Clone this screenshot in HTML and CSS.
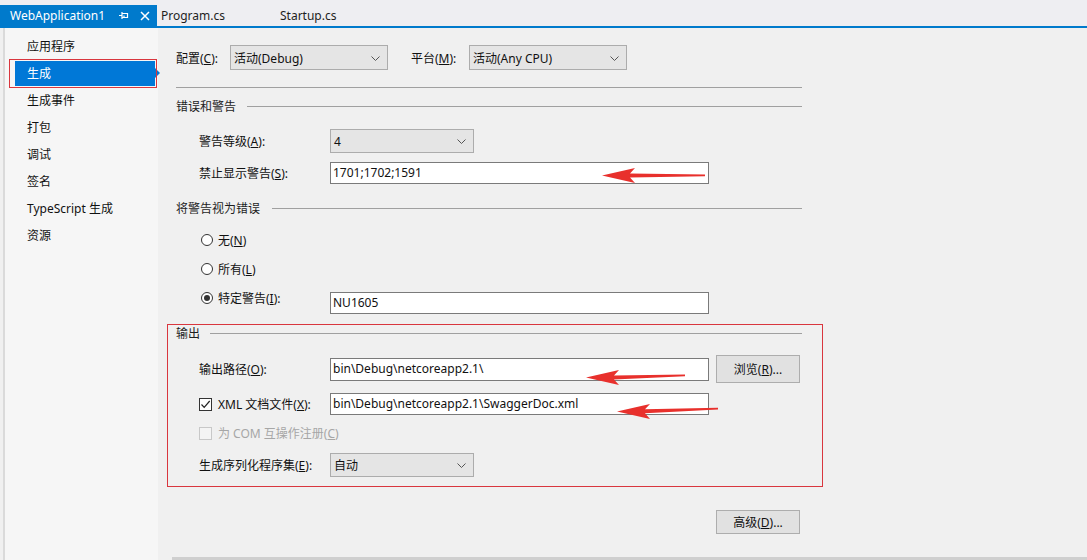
FILE: index.html
```html
<!DOCTYPE html>
<html lang="zh-CN">
<head>
    <meta charset="UTF-8">
    <title>WebApplication1 - 生成</title>
    <link rel="stylesheet" href="styles.css">
</head>
<body>
    <div class="tabs">
        <div class="tab active">
            <span class="tab-name">WebApplication1</span>
            <svg class="pin" width="10" height="9" viewBox="0 0 10 9">
                <path d="M0 4.5H3M3 1V8M3 2.5H8.5V6.5H3M5 6.5V4.5" fill="none" stroke="#fff" stroke-width="1.2"/>
            </svg>
            <svg class="close" width="10" height="10" viewBox="0 0 10 10">
                <path d="M1 1L9 9M9 1L1 9" stroke="#fff" stroke-width="1.5"/>
            </svg>
        </div>
        <div class="tab program">Program.cs</div>
        <div class="tab">Startup.cs</div>
    </div>

    <div class="page">
        <nav class="side">
            <div class="item">应用程序</div>
            <div class="item selected">生成</div>
            <div class="item">生成事件</div>
            <div class="item">打包</div>
            <div class="item">调试</div>
            <div class="item">签名</div>
            <div class="item">TypeScript 生成</div>
            <div class="item">资源</div>
        </nav>

        <main class="main">
            <div class="config-row">
                <span class="cfg-label">配置(<u>C</u>):</span>
                <div class="select cfg-select">活动(Debug)<svg class="chev" width="9" height="5" viewBox="0 0 9 5"><path d="M0.5 0.5L4.5 4.5L8.5 0.5" fill="none" stroke="#555"/></svg></div>
                <span class="cfg-label platform">平台(<u>M</u>):</span>
                <div class="select cfg-select">活动(Any CPU)<svg class="chev" width="9" height="5" viewBox="0 0 9 5"><path d="M0.5 0.5L4.5 4.5L8.5 0.5" fill="none" stroke="#555"/></svg></div>
            </div>

            <div class="sep"></div>

            <div class="group-head first">错误和警告<span class="rule"></span></div>

            <div class="row level">
                <span class="label">警告等级(<u>A</u>):</span>
                <div class="select small">4<svg class="chev" width="9" height="5" viewBox="0 0 9 5"><path d="M0.5 0.5L4.5 4.5L8.5 0.5" fill="none" stroke="#555"/></svg></div>
            </div>
            <div class="row suppress">
                <span class="label">禁止显示警告(<u>S</u>):</span>
                <div class="input">1701;1702;1591</div>
            </div>

            <div class="group-head treat">将警告视为错误<span class="rule"></span></div>

            <div class="radio-row none"><span class="radio"></span>无(<u>N</u>)</div>
            <div class="radio-row all"><span class="radio"></span>所有(<u>L</u>)</div>
            <div class="row specific">
                <span class="label radio-label"><span class="radio checked"></span>特定警告(<u>I</u>):</span>
                <div class="input">NU1605</div>
            </div>

            <div class="output-box">
                <div class="group-head out">输出<span class="rule"></span></div>

                <div class="row path">
                    <span class="label">输出路径(<u>O</u>):</span>
                    <div class="input">bin\Debug\netcoreapp2.1\</div>
                    <div class="button browse">浏览(<u>R</u>)...</div>
                </div>
                <div class="row xml">
                    <span class="label check-label">
                        <span class="check"><svg width="11" height="11" viewBox="0 0 11 11"><path d="M1.5 5.5L4.2 8.3L9.7 2" fill="none" stroke="#222" stroke-width="1.2"/></svg></span>XML 文档文件(<u>X</u>):
                    </span>
                    <div class="input">bin\Debug\netcoreapp2.1\SwaggerDoc.xml</div>
                </div>
                <div class="check-row disabled"><span class="check"></span>为 COM 互操作注册(<u>C</u>)</div>
                <div class="row serial">
                    <span class="label">生成序列化程序集(<u>E</u>):</span>
                    <div class="select small">自动<svg class="chev" width="9" height="5" viewBox="0 0 9 5"><path d="M0.5 0.5L4.5 4.5L8.5 0.5" fill="none" stroke="#555"/></svg></div>
                </div>
            </div>

            <div class="advanced-row">
                <div class="button">高级(<u>D</u>)...</div>
            </div>

            <div class="hscroll"></div>
        </main>
    </div>

    <!-- annotation arrows drawn over the form -->
    <svg class="arrow a1" width="104" height="15" viewBox="0 0 104 15"><polygon points="0,7.5 33,0 28,5.6 103,6.6 103,8.2 28,9.6 33,15"/></svg>
    <svg class="arrow a2" width="100" height="15" viewBox="0 0 100 15"><polygon points="0,7.5 33,0 28,5.4 99,4.6 99,6.2 28,9.4 33,15"/></svg>
    <svg class="arrow a3" width="102" height="15" viewBox="0 0 102 15"><polygon points="0,7.5 33,0 28,5.2 101,3.8 101,5.4 28,9.2 33,15"/></svg>
</body>
</html>
```

FILE: styles.css
```css
* {
    margin: 0;
    padding: 0;
    box-sizing: border-box;
}

body {
    font-family: "Noto Sans", "Noto Sans CJK SC", sans-serif;
    font-size: 12px;
    color: #111;
    background: #f0f0f0;
    height: 560px;
    overflow: hidden;
    position: relative;
}

u {
    text-decoration: underline;
    text-underline-offset: 1px;
}

/* Document tabs */
.tabs {
    display: flex;
    height: 28px;
    padding-top: 5px;
    background: #eeeef2;
    border-bottom: 2px solid #007acc;
}

.tab {
    height: 21px;
    display: flex;
    align-items: center;
    padding-left: 4px;
    color: #1e1e1e;
    font-size: 12px;
}

.tab.active {
    width: 157px;
    padding-left: 10px;
    background: #007acc;
    color: #fff;
}

.tab.active .pin {
    margin-left: 14px;
}

.tab.active .close {
    margin-left: 11px;
}

.tab.program {
    width: 119px;
}

/* Page */
.page {
    display: flex;
    height: 532px;
}

.side {
    width: 155px;
    margin-left: 3px;
    border-left: 2px solid #dadada;
    background: #f6f6f6;
    padding-top: 5px;
}

.item {
    height: 27px;
    line-height: 27px;
    padding-left: 22px;
}

.item.selected {
    position: relative;
    height: 25px;
    line-height: 25px;
    margin: 1px 0 1px 10px;
    width: 140px;
    padding-left: 12px;
    background: #0078d7;
    color: #fff;
}

.item.selected::before {
    content: '';
    position: absolute;
    right: -5px;
    top: 7px;
    border-left: 5px solid #0078d7;
    border-top: 5px solid transparent;
    border-bottom: 5px solid transparent;
}

.item.selected::after {
    content: '';
    position: absolute;
    left: -6px;
    right: -2px;
    top: -2px;
    bottom: -2px;
    border: 1px solid #d9363e;
}

.main {
    flex: 1;
    padding-top: 17px;
    padding-left: 18px;
}

/* Config / platform */
.config-row {
    display: flex;
    align-items: center;
    height: 25px;
}

.cfg-label {
    width: 54px;
}

.cfg-label.platform {
    width: 58px;
    margin-left: 23px;
}

.select {
    position: relative;
    display: flex;
    align-items: center;
    padding-left: 3px;
    background: #e5e5e5;
    border: 1px solid #acacac;
}

.select .chev {
    position: absolute;
    right: 7px;
    top: 50%;
    margin-top: -2px;
}

.cfg-select {
    width: 158px;
    height: 25px;
}

.select.small {
    width: 144px;
    height: 24px;
}

.sep {
    width: 626px;
    height: 1px;
    margin-top: 17px;
    background: #a0a0a0;
}

.group-head {
    display: flex;
    align-items: center;
    height: 16px;
    width: 626px;
    color: #1e1e1e;
}

.group-head .rule {
    flex: 1;
    height: 1px;
    background: #a0a0a0;
    margin-left: 11px;
}

.group-head.first {
    margin-top: 10px;
}

.group-head.treat {
    margin-top: 16px;
}

.group-head.treat .rule {
    margin-left: 12px;
}

/* Form rows */
.row {
    display: flex;
    align-items: center;
    padding-left: 23px;
}

.label {
    width: 131px;
    flex: none;
}

.input {
    width: 379px;
    height: 22px;
    line-height: 20px;
    padding-left: 2px;
    background: #fff;
    border: 1px solid #7a7a7a;
}

.row.level {
    height: 24px;
    margin-top: 15px;
}

.row.suppress {
    height: 22px;
    margin-top: 9px;
}

.radio-row {
    display: flex;
    align-items: center;
    height: 20px;
    padding-left: 25px;
}

.radio-row.none {
    margin-top: 14px;
}

.radio-row.all {
    margin-top: 9px;
}

.radio {
    position: relative;
    width: 12px;
    height: 12px;
    margin-right: 5px;
    border: 1px solid #333;
    border-radius: 50%;
    background: #fff;
    flex: none;
}

.radio.checked::after {
    content: '';
    position: absolute;
    left: 2px;
    top: 2px;
    width: 6px;
    height: 6px;
    border-radius: 50%;
    background: #333;
}

.row.specific {
    align-items: flex-start;
    margin-top: 13px;
}

.radio-label {
    display: flex;
    align-items: center;
    height: 12px;
    padding-left: 2px;
}

/* Output group */
.output-box {
    width: 656px;
    margin-top: 10px;
    margin-left: -9px;
    padding: 0 19px 9px 8px;
    border: 1px solid #d9363e;
}

.group-head.out .rule {
    margin-left: 10px;
}

.row.path {
    height: 28px;
    margin-top: 14px;
}

.row.path .input {
    height: 23px;
}

.button {
    width: 84px;
    height: 28px;
    display: flex;
    align-items: center;
    justify-content: center;
    background: #e1e1e1;
    border: 1px solid #adadad;
}

.browse {
    margin-left: 7px;
}

.row.xml {
    height: 22px;
    margin-top: 10px;
}

.check-label {
    display: flex;
    align-items: center;
}

.check {
    width: 13px;
    height: 13px;
    margin-right: 6px;
    border: 1px solid #333;
    background: #fff;
    display: flex;
    align-items: center;
    justify-content: center;
    flex: none;
}

.check-row {
    display: flex;
    align-items: center;
    height: 16px;
    margin-top: 10px;
    padding-left: 23px;
}

.check-row.disabled {
    color: #a6a6a6;
}

.check-row.disabled .check {
    border-color: #c8c8c8;
    background: #f4f4f4;
}

.row.serial {
    height: 24px;
    margin-top: 12px;
}

.advanced-row {
    margin-top: 23px;
    padding-left: 540px;
}

.advanced-row .button {
    height: 24px;
}

.hscroll {
    height: 3px;
    margin-top: 23px;
    margin-left: -4px;
    background: #cfcfcf;
}

/* Annotation arrows */
.arrow {
    position: absolute;
    fill: #e8302c;
}

.a1 {
    left: 602px;
    top: 168px;
}

.a2 {
    left: 586px;
    top: 370px;
}

.a3 {
    left: 617px;
    top: 404px;
}
```
